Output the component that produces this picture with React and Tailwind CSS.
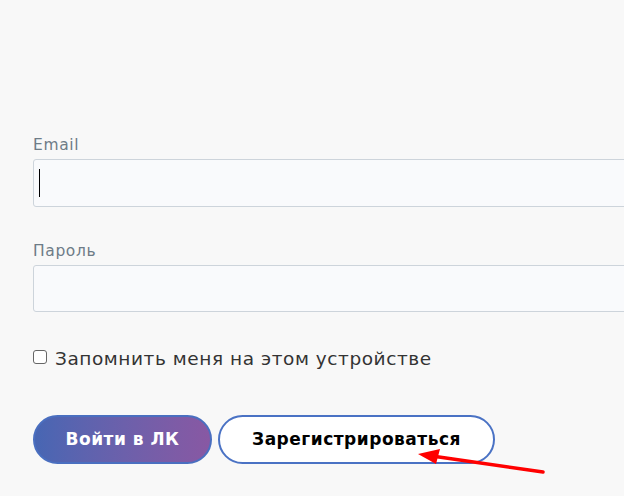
import React from 'react';

function App() {
  return (
    <div className="w-[624px] h-[496px] overflow-hidden bg-[#f8f8f8] relative" style={{ fontFamily: '"DejaVu Sans", "Noto Sans", sans-serif' }}>
      <form className="pt-[136px] pl-[33px] w-[700px]">
        <label className="block text-[15.5px] leading-[18px] tracking-[0.04em] text-[#6e7c87] mb-[5px]">Email</label>
        <div className="h-[48px] border border-[#cdd4db] rounded-[3px] bg-[#f9fafc] flex items-center pl-[5px]">
          <span className="w-[1px] h-[28px] bg-black"></span>
        </div>

        <label className="block text-[15.5px] leading-[18px] tracking-[0.04em] text-[#6e7c87] mt-[35px] mb-[5px]">Пароль</label>
        <div className="h-[47px] border border-[#cdd4db] rounded-[3px] bg-[#f9fafc]"></div>

        <div className="flex items-center mt-[34px] gap-[8px]">
          <span className="w-[14px] h-[14px] border border-[#666] rounded-[3px] bg-white mt-[-2px]"></span>
          <span className="text-[18.5px] leading-[22px] tracking-[0.03em] text-[#333] mt-[2px]">Запомнить меня на этом устройстве</span>
        </div>

        <div className="flex mt-[45px] gap-[6px]">
          <button type="button" className="w-[179px] h-[49px] rounded-full border-2 border-[#4a6fc0] bg-gradient-to-r from-[#4766b3] to-[#8858a3] text-white font-bold text-[17px] tracking-[0.03em]">
            Войти в ЛК
          </button>
          <button type="button" className="w-[277px] h-[49px] rounded-full border-2 border-[#4a72c4] bg-white text-black font-bold text-[17px] tracking-[0.03em]">
            Зарегистрироваться
          </button>
        </div>
      </form>

      <svg className="absolute left-0 top-0" width="624" height="496">
        <line x1="543" y1="472" x2="432" y2="456" stroke="#ff0000" strokeWidth="3.5" strokeLinecap="round" />
        <polygon points="418,454 440,449 436,464" fill="#ff0000" />
      </svg>
    </div>
  );
}

export default App;
